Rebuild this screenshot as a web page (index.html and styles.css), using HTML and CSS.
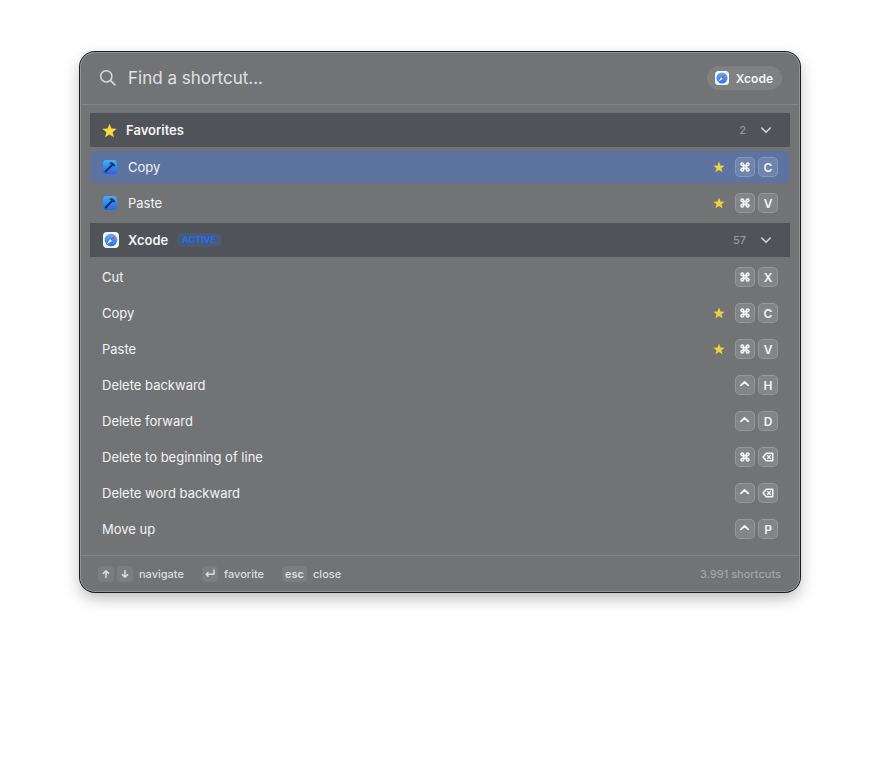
FILE: index.html
```html
<!DOCTYPE html>
<html lang="en">
<head>
    <meta charset="UTF-8">
    <meta name="viewport" content="width=device-width, initial-scale=1.0">
    <title>Shortcuts</title>
    <link rel="stylesheet" href="styles.css">
</head>
<body>
    <!-- shared icons -->
    <svg class="defs" width="0" height="0" aria-hidden="true">
        <defs>
            <linearGradient id="blue" x1="0" y1="0" x2="0" y2="1">
                <stop offset="0" stop-color="#3fb0fb"/>
                <stop offset="1" stop-color="#2463f0"/>
            </linearGradient>
            <linearGradient id="dial" x1="0" y1="0" x2="0" y2="1">
                <stop offset="0" stop-color="#5fb4f8"/>
                <stop offset="1" stop-color="#2a6cf3"/>
            </linearGradient>
        </defs>
        <symbol id="star" viewBox="0 0 24 24">
            <path fill="currentColor" d="M12 1l3 7.800 8.400.5-6.500 5.300 2.200 8.100L12 18.200l-7.100 4.500 2.200-8.100L.6 9.300 9 8.800z"/>
        </symbol>
        <symbol id="chevron" viewBox="0 0 12 12">
            <path fill="none" stroke="currentColor" stroke-width="1.6" stroke-linecap="round" stroke-linejoin="round" d="M1.800 4l4.200 4.300L10.200 4"/>
        </symbol>
        <symbol id="safari" viewBox="0 0 16 16">
            <rect width="16" height="16" rx="4" fill="#f6f8fa"/>
            <circle cx="8" cy="8" r="6.300" fill="url(#dial)"/>
            <path d="M12.200 3.800L7.100 7.100l1.800 1.800z" fill="#e8413c"/>
            <path d="M3.800 12.200l3.300-5.100 1.800 1.800z" fill="#f4f6fa"/>
        </symbol>
        <symbol id="hammer" viewBox="0 0 16 16">
            <rect x="1" y="1" width="14" height="14" rx="3.300" fill="url(#blue)"/>
            <path d="M3.700 12.500l6.600-6.700" stroke="#1d2f4e" stroke-width="2" stroke-linecap="round"/>
            <path d="M6.800 4.200C8.300 3 10.200 3 11.500 4.200l1.900 2-1.300 1.500-1.500-1-1-1.600z" fill="#2b3444"/>
        </symbol>
        <symbol id="cmd" viewBox="0 0 12 12">
            <path fill="none" stroke="currentColor" stroke-width="1.600" d="M4.600 4.600h2.800v2.800H4.600zM4.600 4.600H3.300A1.300 1.300 0 1 1 4.600 3.300zM7.400 4.600V3.300A1.300 1.300 0 1 1 8.700 4.600zM7.400 7.400H8.700A1.300 1.300 0 1 1 7.400 8.700zM4.600 7.400V8.700A1.300 1.300 0 1 1 3.300 7.400z"/>
        </symbol>
        <symbol id="ctrl" viewBox="0 0 12 12">
            <path fill="none" stroke="currentColor" stroke-width="1.800" stroke-linecap="round" stroke-linejoin="round" d="M1.900 6.300L5.600 3l3.700 3.300"/>
        </symbol>
        <symbol id="del" viewBox="0 0 12 12">
            <path fill="none" stroke="currentColor" stroke-width="1.500" stroke-linejoin="round" d="M4.300 2.200h6.400v7.600H4.300L1.100 6z"/>
            <path fill="none" stroke="currentColor" stroke-width="1.400" stroke-linecap="round" d="M5.500 4.600l2.800 2.800m0-2.800l-2.800 2.800"/>
        </symbol>
    </svg>

    <main class="panel">
        <header class="search">
            <label for="search" class="search-label" aria-label="Find a shortcut">
                <svg class="search-icon" viewBox="0 0 18 18"><circle cx="7.300" cy="7.300" r="5.600"/><path d="M11.600 11.600l4.300 4.300"/></svg>
            </label>
            <input type="text" id="search" placeholder="Find a shortcut...">
            <button class="app-pill"><svg><use href="#safari"/></svg>Xcode</button>
        </header>

        <div class="list">
            <button class="section">
                <svg class="section-star"><use href="#star"/></svg>
                <span class="section-name">Favorites</span>
                <span class="count">2</span>
                <svg class="chevron"><use href="#chevron"/></svg>
            </button>
            <div class="row selected">
                <svg class="row-icon"><use href="#hammer"/></svg>
                <span class="name">Copy</span>
                <svg class="star"><use href="#star"/></svg>
                <span class="keys"><kbd><svg><use href="#cmd"/></svg></kbd><kbd>C</kbd></span>
            </div>
            <div class="row">
                <svg class="row-icon"><use href="#hammer"/></svg>
                <span class="name">Paste</span>
                <svg class="star"><use href="#star"/></svg>
                <span class="keys"><kbd><svg><use href="#cmd"/></svg></kbd><kbd>V</kbd></span>
            </div>

            <button class="section">
                <svg class="section-app"><use href="#safari"/></svg>
                <span class="section-name">Xcode</span>
                <span class="active">ACTIVE</span>
                <span class="count">57</span>
                <svg class="chevron"><use href="#chevron"/></svg>
            </button>
            <div class="row">
                <span class="name">Cut</span>
                <span class="keys"><kbd><svg><use href="#cmd"/></svg></kbd><kbd>X</kbd></span>
            </div>
            <div class="row">
                <span class="name">Copy</span>
                <svg class="star"><use href="#star"/></svg>
                <span class="keys"><kbd><svg><use href="#cmd"/></svg></kbd><kbd>C</kbd></span>
            </div>
            <div class="row">
                <span class="name">Paste</span>
                <svg class="star"><use href="#star"/></svg>
                <span class="keys"><kbd><svg><use href="#cmd"/></svg></kbd><kbd>V</kbd></span>
            </div>
            <div class="row">
                <span class="name">Delete backward</span>
                <span class="keys"><kbd><svg><use href="#ctrl"/></svg></kbd><kbd>H</kbd></span>
            </div>
            <div class="row">
                <span class="name">Delete forward</span>
                <span class="keys"><kbd><svg><use href="#ctrl"/></svg></kbd><kbd>D</kbd></span>
            </div>
            <div class="row">
                <span class="name">Delete to beginning of line</span>
                <span class="keys"><kbd><svg><use href="#cmd"/></svg></kbd><kbd><svg><use href="#del"/></svg></kbd></span>
            </div>
            <div class="row">
                <span class="name">Delete word backward</span>
                <span class="keys"><kbd><svg><use href="#ctrl"/></svg></kbd><kbd><svg><use href="#del"/></svg></kbd></span>
            </div>
            <div class="row">
                <span class="name">Move up</span>
                <span class="keys"><kbd><svg><use href="#ctrl"/></svg></kbd><kbd>P</kbd></span>
            </div>
        </div>

        <footer class="footer">
            <span class="hint">
                <span class="keys">
                    <kbd><svg viewBox="0 0 10 10"><path d="M5 8.500V2M2.400 4.400L5 1.800l2.600 2.600"/></svg></kbd>
                    <kbd><svg viewBox="0 0 10 10"><path d="M5 1.500V8M2.400 5.600L5 8.200l2.600-2.600"/></svg></kbd>
                </span>
                navigate
            </span>
            <span class="hint"><kbd><svg viewBox="0 0 10 10"><path d="M9 1v4.300H1.500M3 3.500L1.200 5.300 3 7.100"/></svg></kbd>favorite</span>
            <span class="hint"><kbd>esc</kbd>close</span>
            <span class="total">3.991 shortcuts</span>
        </footer>
    </main>
</body>
</html>
```

FILE: styles.css
```css
* {
    box-sizing: border-box;
}
body {
    margin: 0;
    padding: 52px 80px;
    background: #fff;
    font-family: Inter, "Liberation Sans", sans-serif;
    font-size: 13px;
    color: #f4f4f5;
}
button, input {
    font: inherit;
    color: inherit;
    border: none;
    background: none;
    padding: 0;
}
svg {
    display: block;
    flex-shrink: 0;
}
.defs {
    position: absolute;
}
.panel {
    background: #717375;
    border-radius: 15px;
    box-shadow: inset 0 0 0 1px #929395, 0 0 0 1px #1c1d1f, 0 6px 16px rgba(0, 0, 0, 0.28);
}

/* search bar */
.search {
    display: flex;
    align-items: center;
    height: 53px;
    margin: 0 1px;
    padding: 0 17px 0 18px;
    border-bottom: 1px solid #828486;
}
.search-icon {
    width: 18px;
    height: 18px;
    fill: none;
    stroke: #dcdcdd;
    stroke-width: 1.5;
    stroke-linecap: round;
}
.search input {
    flex: 1;
    min-width: 0;
    margin-left: 11px;
    font-size: 17px;
    outline: none;
}
.search input::placeholder {
    color: #e0e1e2;
    opacity: 1;
}
.app-pill {
    display: flex;
    align-items: center;
    gap: 7px;
    height: 24px;
    padding: 0 9px 0 8px;
    border-radius: 12px;
    background: #7e8082;
    font-size: 12px;
    font-weight: 600;
}
.app-pill svg {
    width: 14px;
    height: 14px;
}

/* list */
.list {
    display: flex;
    flex-direction: column;
    gap: 4px;
    padding: 8px 10px 10px;
}
.section {
    display: flex;
    align-items: center;
    height: 34px;
    padding: 0 18px 0 12px;
    background: #505357;
    text-align: left;
}
.section-star {
    width: 15px;
    height: 15px;
    margin-right: 9px;
    color: #fddb3a;
}
.section-app {
    width: 16px;
    height: 16px;
    margin: 0 9px 0 1px;
}
.section-name {
    font-weight: 600;
}
.active {
    margin-left: 8px;
    padding: 0 6px;
    border-radius: 7px;
    background: #4b5a74;
    color: #1e6df6;
    font-size: 9px;
    line-height: 14px;
    font-weight: 700;
}
.count {
    margin-left: auto;
    color: #97999b;
    font-size: 11px;
    font-weight: 500;
}
.chevron {
    width: 12px;
    height: 12px;
    margin-left: 14px;
    color: #d3d4d5;
}
.row {
    display: flex;
    align-items: center;
    height: 32px;
    padding: 0 12px;
    border-radius: 7px;
}
.selected {
    background: #5c749f;
}
.row-icon {
    width: 16px;
    height: 16px;
    margin-right: 10px;
}
.name {
    flex: 1;
}
.star {
    width: 12px;
    height: 12px;
    margin-right: 10px;
    color: #f0d03f;
}
.keys {
    display: flex;
    gap: 3px;
}
kbd {
    display: flex;
    align-items: center;
    justify-content: center;
    font-family: inherit;
    font-weight: 600;
}
.row kbd {
    width: 20px;
    height: 20px;
    border: 1px solid rgba(255, 255, 255, 0.16);
    border-radius: 5px;
    background: rgba(255, 255, 255, 0.12);
    font-size: 12px;
}
.row kbd svg {
    width: 12px;
    height: 12px;
}

/* footer */
.footer {
    display: flex;
    align-items: center;
    gap: 18px;
    height: 37px;
    margin: 0 1px;
    padding: 0 18px 0 17px;
    border-top: 1px solid #828486;
    font-size: 11px;
    font-weight: 500;
    color: #dcddde;
}
.hint {
    display: flex;
    align-items: center;
    gap: 6px;
}
.footer kbd {
    min-width: 16px;
    height: 16px;
    padding: 0 3px;
    border-radius: 4px;
    background: #7b7d7f;
    font-size: 11px;
}
.footer kbd svg {
    width: 10px;
    height: 10px;
    fill: none;
    stroke: currentColor;
    stroke-width: 1.5;
    stroke-linecap: round;
    stroke-linejoin: round;
}
.total {
    margin-left: auto;
    color: #a3a5a6;
}
```
